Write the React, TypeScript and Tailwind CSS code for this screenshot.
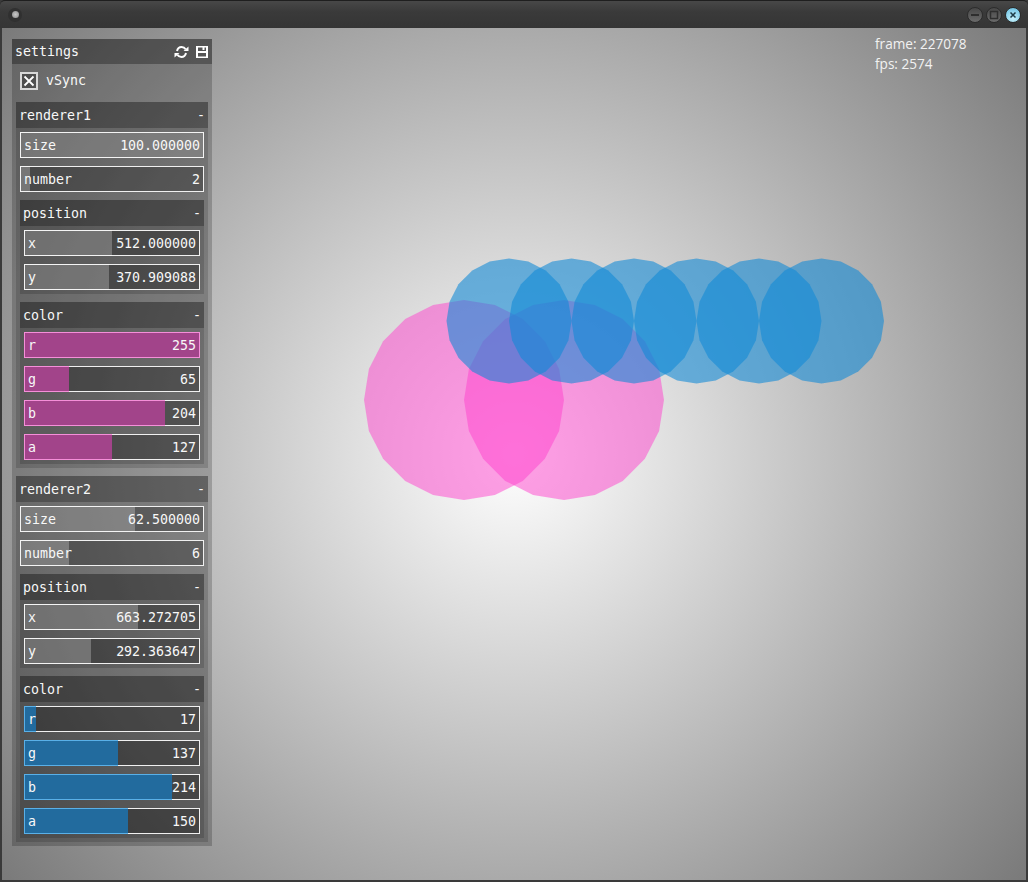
import React from "react";

const mono = "font-['DejaVu_Sans_Mono',monospace] text-[13.28px] leading-none text-[#f8f8f8]";

function poly(cx: number, cy: number, r: number) {
  const pts: string[] = [];
  for (let i = 0; i < 20; i++) {
    const a = (i * 18 * Math.PI) / 180;
    pts.push(`${(cx + r * Math.cos(a)).toFixed(2)},${(cy + r * Math.sin(a)).toFixed(2)}`);
  }
  return pts.join(" ");
}

type Tone = "gray" | "pink" | "blue";

function Slider({ label, value, fill, tone = "gray", full }: { label: string; value: string; fill: number; tone?: Tone; full?: boolean }) {
  const cls =
    tone === "pink"
      ? "bg-[#a2448a] border-[#f58fd9]"
      : tone === "blue"
      ? "bg-[#226b9e] border-[#59b0e8]"
      : "bg-white/25 border-transparent";
  const right = full ? "border-r" : "";
  return (
    <div className={`relative h-[26px] border border-[#f0f0f0] bg-black/25 flex items-center justify-between pl-[3px] pr-[3px] pt-[2px] ${mono}`}>
      <div className={`absolute -left-px -top-px -bottom-px border-y border-l ${right} ${cls}`} style={{ width: fill }} />
      <span className="relative">{label}</span>
      <span className="relative">{value}</span>
    </div>
  );
}

function Header({ title }: { title: string }) {
  return (
    <div className={`h-[26px] bg-black/25 flex items-center justify-between pl-[3px] pr-[3px] pt-[2px] ${mono}`}>
      <span>{title}</span>
      <span>-</span>
    </div>
  );
}

function Group({ title, children }: { title: string; children: React.ReactNode }) {
  return (
    <div className="bg-black/15">
      <Header title={title} />
      <div className="p-1 flex flex-col gap-2">{children}</div>
    </div>
  );
}

function Renderer({ d }: { d: { name: string; size: string; sf: number; num: string; nf: number; x: string; xf: number; y: string; yf: number; tone: Tone; c: [string, number, boolean?][] } }) {
  return (
    <Group title={d.name}>
      <Slider label="size" value={d.size} fill={d.sf} />
      <Slider label="number" value={d.num} fill={d.nf} />
      <Group title="position">
        <Slider label="x" value={d.x} fill={d.xf} />
        <Slider label="y" value={d.y} fill={d.yf} />
      </Group>
      <Group title="color">
        {d.c.map((c, i) => (
          <Slider key={i} label={"rgba"[i]} value={c[0]} fill={c[1]} tone={d.tone} full={c[2]} />
        ))}
      </Group>
    </Group>
  );
}

function WinButton({ kind }: { kind: "min" | "max" | "close" }) {
  const bg =
    kind === "close"
      ? "bg-[radial-gradient(circle_at_50%_75%,#c6f1fb,#62bce0)]"
      : "bg-[linear-gradient(#484848,#6a6a6a)]";
  return (
    <div className={`w-4 h-4 rounded-full flex items-center justify-center border border-[#2c2c2c] ${bg}`}>
      <svg width="10" height="10" viewBox="0 0 10 10">
        {kind === "min" && <rect x="1" y="4" width="8" height="2" fill="#2e2e2e" />}
        {kind === "max" && <rect x="1.5" y="1.5" width="7" height="7" fill="none" stroke="#2e2e2e" strokeWidth="1.5" />}
        {kind === "close" && <path d="M2.5 2.5 L7.5 7.5 M7.5 2.5 L2.5 7.5" stroke="#1d3a46" strokeWidth="1.5" />}
      </svg>
    </div>
  );
}

function RefreshIcon() {
  return (
    <svg width="15" height="12" viewBox="0 0 15 12" fill="none">
      <path d="M3 5 C3.6 2.4 5.4 1 7.6 1 C9.4 1 10.8 1.9 11.6 3.2" stroke="#ffffff" strokeWidth="2" />
      <path d="M9.5 5 L14.5 5 L14.5 0.5 Z" fill="#ffffff" />
      <path d="M12 7 C11.4 9.6 9.6 11 7.4 11 C5.6 11 4.2 10.1 3.4 8.8" stroke="#ffffff" strokeWidth="2" />
      <path d="M5.5 7 L0.5 7 L0.5 11.5 Z" fill="#ffffff" />
    </svg>
  );
}

function SaveIcon() {
  return (
    <svg width="12" height="12" viewBox="0 0 12 12">
      <path
        fillRule="evenodd"
        fill="#ffffff"
        d="M0 0 H12 V12 H0 Z M2 1.5 V5 H10 V1.5 H8.5 V4 H6.5 V1.5 Z M2 7 V10.5 H10 V7 Z"
      />
    </svg>
  );
}

export default function App() {
  return (
    <div className="w-[1028px] h-[882px] flex flex-col bg-[#3a3a3a] overflow-hidden">
      <div className="h-7 shrink-0 flex items-center justify-between pl-2 pr-[7px] border-t border-[#1f1f1f] rounded-t-[5px] bg-[linear-gradient(#484848,#3a3a3a_40%,#353535)]">
        <div className="w-[14px] h-[14px] rounded-full bg-[#303030] flex items-center justify-center">
          <div className="w-[7px] h-[7px] rounded-full bg-[radial-gradient(circle,#c8c8c8,#888888)]" />
        </div>
        <div className="flex items-center gap-[3px]">
          <WinButton kind="min" />
          <WinButton kind="max" />
          <WinButton kind="close" />
        </div>
      </div>
      <div className="flex-1 relative mx-0.5 mb-0.5 pt-[11px] pl-[10px] bg-[radial-gradient(circle_675px_at_512px_426px,#ffffff_0px,#787878_675px)]">
        <svg className="absolute left-0 top-0" width="1024" height="852" viewBox="2 28 1024 852">
          <polygon points={poly(464, 400, 100)} fill="rgb(255,65,204)" fillOpacity={127 / 255} />
          <polygon points={poly(564, 400, 100)} fill="rgb(255,65,204)" fillOpacity={127 / 255} />
          {[509, 571.5, 634, 696.5, 759, 821.5].map((x) => (
            <polygon key={x} points={poly(x, 321, 62.5)} fill="rgb(17,137,214)" fillOpacity={150 / 255} />
          ))}
        </svg>
        <div className="absolute left-[873px] top-[6px] font-['Open_Sans',sans-serif] text-[13.6px] leading-[20px] text-[#f2f2f2]">
          <div>frame: 227078</div>
          <div>fps: 2574</div>
        </div>
        <div className="relative w-[200px] bg-black/20">
          <div className={`h-[25px] bg-black/30 flex items-center justify-between pl-[3px] pr-1 pt-[1px] ${mono}`}>
            <span>settings</span>
            <span className="flex items-center gap-[7px]">
              <RefreshIcon />
              <SaveIcon />
            </span>
          </div>
          <div className="px-1 pb-1">
            <div className={`h-[38px] flex items-center gap-2 pl-1 pb-[4px] ${mono}`}>
              <div className="w-[18px] h-[18px] border-2 border-[#d8d8d8] bg-black/25 flex items-center justify-center">
                <svg width="12" height="12" viewBox="0 0 12 12">
                  <path d="M1.5 1.5 L10.5 10.5 M10.5 1.5 L1.5 10.5" stroke="#ffffff" strokeWidth="1.8" />
                </svg>
              </div>
              <span>vSync</span>
            </div>
            <div className="flex flex-col gap-2">
              <Renderer
                d={{
                  name: "renderer1", size: "100.000000", sf: 184, num: "2", nf: 10,
                  x: "512.000000", xf: 88, y: "370.909088", yf: 85, tone: "pink",
                  c: [["255", 176, true], ["65", 45], ["204", 141], ["127", 88]],
                }}
              />
              <Renderer
                d={{
                  name: "renderer2", size: "62.500000", sf: 115, num: "6", nf: 49,
                  x: "663.272705", xf: 114, y: "292.363647", yf: 67, tone: "blue",
                  c: [["17", 12], ["137", 94], ["214", 148], ["150", 104]],
                }}
              />
            </div>
          </div>
        </div>
      </div>
    </div>
  );
}
